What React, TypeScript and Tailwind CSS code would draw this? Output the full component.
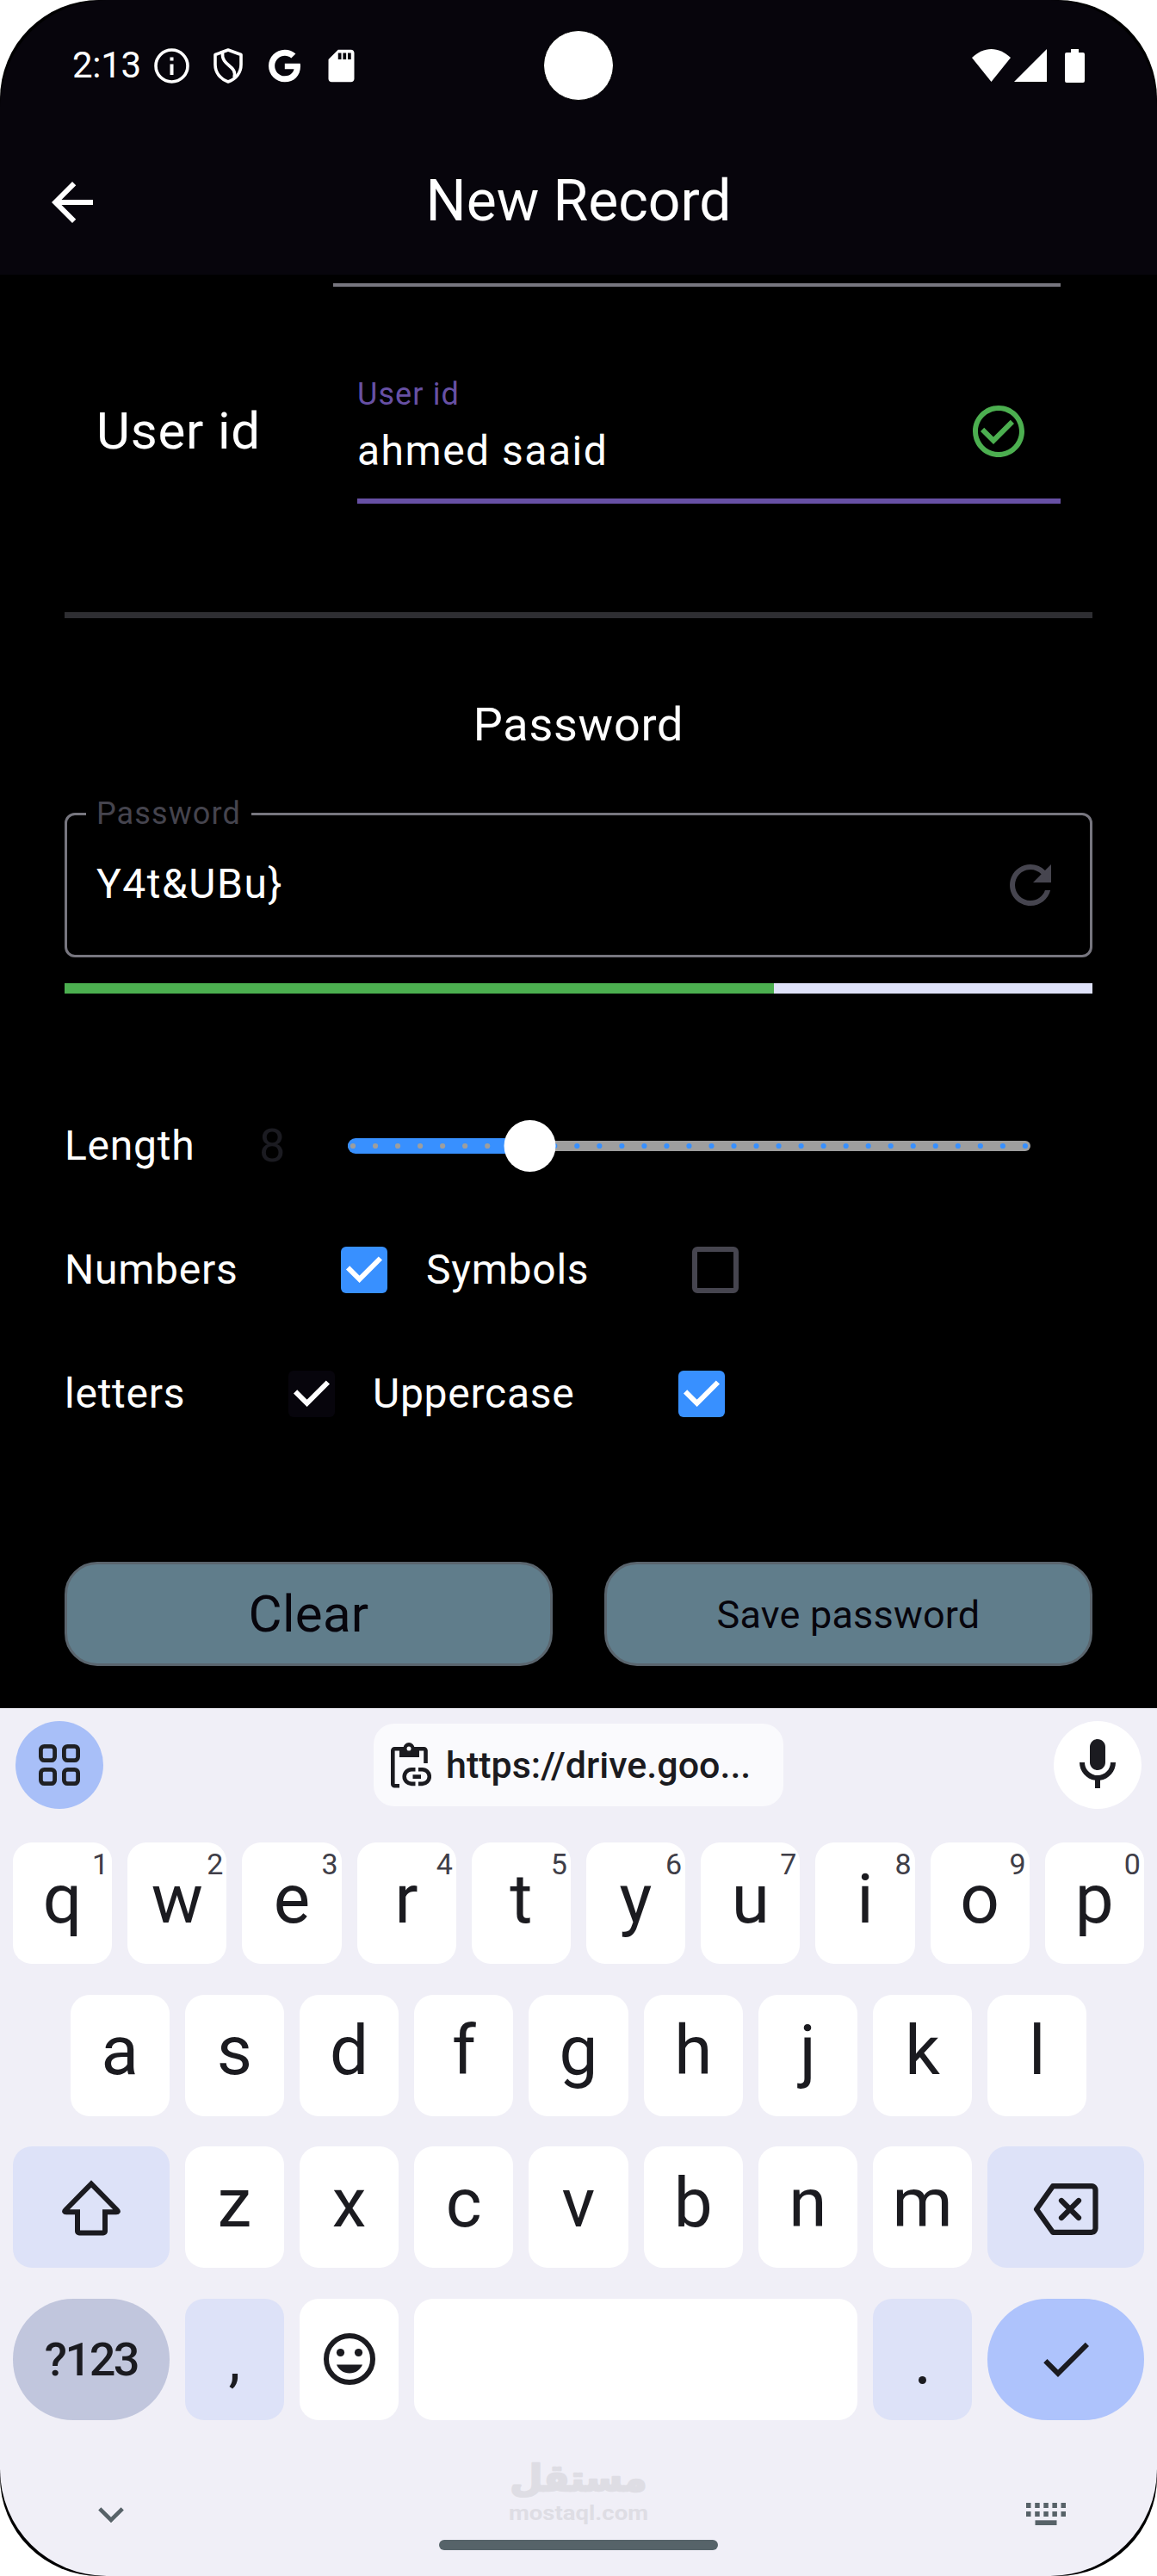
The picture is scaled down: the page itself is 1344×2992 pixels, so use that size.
import type { ReactNode } from "react";
import { MdArrowBack, MdCheckCircleOutline, MdRefresh, MdSdCard, MdCheck } from "react-icons/md";
import { FaGoogle } from "react-icons/fa";

function StatusBar() {
  return (
    <div className="relative flex h-[152px] shrink-0 items-center pl-[84px] pr-[84px] text-white">
      <span className="w-[95px] text-[42px] leading-[48px] tracking-[-0.300px]">2:13</span>
      <svg className="h-[41px] w-[41px]" viewBox="0 0 41 41" fill="none">
        <circle cx="20.5" cy="20.5" r="18.5" stroke="currentColor" strokeWidth="3.6" />
        <path d="M20.5 18.5V31M20.5 10.5v4" stroke="currentColor" strokeWidth="4" />
      </svg>
      <svg className="ml-[28px] h-[41px] w-[34px]" viewBox="0 0 34 41" fill="none" stroke="currentColor" strokeWidth="3.6" strokeLinejoin="round">
        <path d="M17 2 32 7.5V19c0 9.500-6 17-15 20C8 36 2 28.500 2 19V7.500Z" />
        <path d="M10.500 5C9 22 28 19 24 34" />
      </svg>
      <FaGoogle className="ml-[30px] h-[39px] w-[37px]" />
      <MdSdCard className="ml-[25px] h-[45px] w-[45px]" />
      <div className="absolute left-[631px] top-[35px] h-[82px] w-[82px] rounded-full border border-black bg-white" />
      <svg className="ml-auto h-[38px] w-[45px]" viewBox="0 0 45 38" fill="currentColor">
        <path d="M0 10C7 3.500 14.500 0 22.500 0S38 3.500 45 10L22.500 38Z" />
      </svg>
      <svg className="ml-[4px] h-[38px] w-[38px]" viewBox="0 0 38 38" fill="currentColor">
        <path d="M38 0v38H0Z" />
      </svg>
      <svg className="ml-[21px] h-[39px] w-[23px]" viewBox="0 0 23 39" fill="currentColor">
        <path d="M7 0h9v4h5a2 2 0 0 1 2 2v31a2 2 0 0 1-2 2H2a2 2 0 0 1-2-2V6a2 2 0 0 1 2-2h5Z" />
      </svg>
    </div>
  );
}

function Checkbox({ tone }: { tone: "blue" | "dark" | "empty" }) {
  if (tone === "empty") {
    return <div className="h-[54px] w-[54px] shrink-0 rounded-[6px] border-[6px] border-[#46454f]" />;
  }
  return (
    <div className={`h-[54px] w-[54px] shrink-0 rounded-[6px] ${tone === "blue" ? "bg-[#3890ff]" : "bg-[#07050c]"}`}>
      <svg viewBox="0 0 54 54" fill="none" className="h-full w-full">
        <path d="M8.100 24.300 21.600 37.800 45.900 13.500" stroke="#fff" strokeWidth="6" />
      </svg>
    </div>
  );
}

function LengthSlider() {
  const ticks = Array.from({ length: 31 }, (_, i) => i);
  return (
    <svg className="h-[60px] w-[793px]" viewBox="0 0 793 60">
      <rect x="0" y="24" width="793" height="12" rx="6" fill="#9e9e9e" />
      <rect x="0" y="21" width="220" height="18" rx="9" fill="#3890ff" />
      {ticks.map((i) => (
        <circle key={i} cx={6 + i * 26.03} cy="30" r="3.1" fill={i < 8 ? "#9e9e9e" : "#3890ff"} />
      ))}
      <circle cx="211.500" cy="30" r="30" fill="#fff" />
    </svg>
  );
}

function Form() {
  return (
    <div className="flex h-[1665px] flex-col bg-black px-[75px] text-[48px] text-white">
      <div className="ml-[312px] mt-[10px] h-[3.500px] w-[845px] bg-[#77767f]" />

      <div className="mt-[84.500px] flex h-[168px] items-center pl-[37px] pr-[37px]">
        <div className="w-[303px] shrink-0 text-[60px] leading-[72px] tracking-[0.800px]">User id</div>
        <div className="flex h-[168px] flex-1 items-center border-b-[6px] border-[#6750a4] pr-[36px]">
          <div className="h-[168px] flex-1 pt-[20px]">
            <div className="text-[36px] leading-[48px] tracking-[1.100px] text-[#6750a4]">User id</div>
            <div className="mt-[6px] leading-[72px] tracking-[1.500px]">ahmed saaid</div>
          </div>
          <MdCheckCircleOutline className="mt-[6px] h-[72px] w-[72px] text-[#4caf50]" />
        </div>
      </div>

      <div className="mt-[126px] h-[6.500px] shrink-0 bg-[#2e2e32]" />
      <div className="mt-[92px] text-center text-[54px] leading-[64px] tracking-[0.750px]">Password</div>

      <div className="relative mt-[70px] flex h-[168px] shrink-0 items-center justify-between rounded-[12px] border-[3px] border-[#77767f] pl-[34px] pr-[33px]">
        <span className="absolute left-[22px] top-[-26px] w-[192px] bg-black pl-[12px] text-[36px] leading-[48px] tracking-[1.100px] text-[#45444e]">
          Password
        </span>
        <span className="-mt-[2px] leading-[72px] tracking-[1.500px]">Y4t&amp;UBu&#125;</span>
        <MdRefresh className="h-[72px] w-[72px] text-[#46454f]" />
      </div>

      <div className="mt-[30px] flex h-[12.500px] shrink-0 bg-[#dfe2f9]">
        <div className="w-[824px] bg-[#4caf50]" />
      </div>

      <div className="mt-[104.500px] flex h-[144px] shrink-0 items-center tracking-[0.750px]">
        <span className="w-[226px]">Length</span>
        <span className="w-[103px] text-[54px] text-[#1b1b21]">8</span>
        <LengthSlider />
      </div>
      <div className="flex h-[144px] shrink-0 items-center tracking-[0.750px]">
        <span className="w-[321px]">Numbers</span>
        <Checkbox tone="blue" />
        <span className="ml-[45px] w-[309px]">Symbols</span>
        <Checkbox tone="empty" />
      </div>
      <div className="flex h-[144px] shrink-0 items-center tracking-[0.750px]">
        <span className="w-[260px]">letters</span>
        <Checkbox tone="dark" />
        <span className="ml-[44px] w-[355px]">Uppercase</span>
        <Checkbox tone="blue" />
      </div>

      <div className="mt-[123px] grid h-[121px] shrink-0 grid-cols-2 gap-[60px] text-[#07050c]">
        <button className="rounded-[38px] border-[3px] border-[#5a656e] bg-[#607d8b] pt-[2px] text-[60px] tracking-[0.300px]">Clear</button>
        <button className="rounded-[38px] border-[3px] border-[#5a656e] bg-[#607d8b] pt-[3px] text-[45px] tracking-[0.200px]">Save password</button>
      </div>
    </div>
  );
}

function Key({ children, hint, className = "w-[115.200px] rounded-[22px] bg-white" }: { children?: ReactNode; hint?: string; className?: string }) {
  return (
    <div className={`relative flex h-[141px] shrink-0 items-center justify-center ${className}`}>
      {children}
      {hint && <span className="absolute right-[4px] top-[5px] text-[34px] leading-[40px] text-[#3f3e48]">{hint}</span>}
    </div>
  );
}

function Letter({ children }: { children: ReactNode }) {
  return <span className="pb-[10px] text-[80px] leading-[90px]">{children}</span>;
}

function Suggestions() {
  return (
    <div className="flex h-[156px] items-start justify-between pl-[18px] pr-[18px] pt-[15px]">
      <div className="flex h-[102px] w-[102px] items-center justify-center rounded-full bg-[#a8bff8]">
        <svg className="h-[48px] w-[48px]" viewBox="0 0 48 48" fill="none" stroke="#1f2023" strokeWidth="4.800">
          <rect x="2.400" y="2.400" width="16.200" height="16.200" rx="4" />
          <rect x="29.400" y="2.400" width="16.200" height="16.200" rx="4" />
          <rect x="2.400" y="29.400" width="16.200" height="16.200" rx="4" />
          <rect x="29.400" y="29.400" width="16.200" height="16.200" rx="4" />
        </svg>
      </div>
      <div className="mt-[3px] flex h-[96px] w-[476px] items-center rounded-[24px] bg-[#fafafd] pl-[20px]">
        <svg className="h-[53px] w-[47px]" viewBox="0 0 47 53" fill="none" stroke="#1b1b20" strokeWidth="4.600">
          <path d="M10 50.200H4.300a2 2 0 0 1-2-2V9.300a2 2 0 0 1 2-2H38.500a2 2 0 0 1 2 2V24" />
          <path d="M10 5h5a7 7 0 0 1 12 0h6v12H10Z" fill="#1b1b20" stroke="none" />
          <circle cx="21" cy="6.500" r="6.500" fill="#1b1b20" stroke="none" />
          <circle cx="21" cy="7" r="2.500" fill="#fafafd" stroke="none" />
          <path d="M28.500 31.300H24a8.300 8.300 0 0 0 0 16.600h4.500M32 31.300h4.500a8.300 8.300 0 0 1 0 16.600H32M25.500 39.600h9.500" />
        </svg>
        <span className="ml-[17px] text-[43px] font-medium leading-[56px]">https://drive.goo...</span>
      </div>
      <div className="flex h-[102px] w-[102px] items-center justify-center rounded-full bg-white">
        <svg className="h-[72px] w-[72px]" viewBox="0 0 24 24" fill="#1b1b20">
          <path d="M12 14c1.660 0 3-1.340 3-3V5c0-1.660-1.340-3-3-3S9 3.340 9 5v6c0 1.660 1.340 3 3 3z" />
          <path d="M17 11c0 2.760-2.240 5-5 5s-5-2.240-5-5H5c0 3.530 2.610 6.430 6 6.920V21h2v-3.080c3.390-.49 6-3.390 6-6.920h-2z" />
        </svg>
      </div>
    </div>
  );
}

function Keyboard() {
  return (
    <div className="flex h-[1008px] flex-col bg-[#f0eff7] text-[#1b1b20]">
      <Suggestions />
      <div className="flex flex-col gap-[35.600px] px-[15px]">
        <div className="flex justify-between">
          {"qwertyuiop".split("").map((c, i) => (
            <Key key={c} hint={String((i + 1) % 10)}>
              <Letter>{c}</Letter>
            </Key>
          ))}
        </div>
        <div className="flex justify-center gap-[18px]">
          {"asdfghjkl".split("").map((c) => (
            <Key key={c}>
              <Letter>{c}</Letter>
            </Key>
          ))}
        </div>
        <div className="flex gap-[18px]">
          <Key className="w-[181.800px] rounded-[22px] bg-[#dde2f8]">
            <svg className="h-[66px] w-[68px]" viewBox="0 0 68 66" fill="none" stroke="#1b1b20" strokeWidth="6" strokeLinejoin="round">
              <path d="M34 5.500 4 36c-1.500 1.500-1 2.300 1 2.300H18V60.500a2 2 0 0 0 2 2H48a2 2 0 0 0 2-2V38.300H63c2 0 2.500-.8 1-2.300Z" strokeLinejoin="miter" strokeMiterlimit="2" />
            </svg>
          </Key>
          {"zxcvbnm".split("").map((c) => (
            <Key key={c}>
              <Letter>{c}</Letter>
            </Key>
          ))}
          <Key className="w-[181.800px] rounded-[22px] bg-[#dde2f8]">
            <svg className="mt-[4px] h-[60px] w-[76px]" viewBox="0 0 76 60" fill="none" stroke="#1b1b20" strokeWidth="6.200" strokeLinejoin="round" strokeLinecap="round">
              <path d="M23 3.200H68a4.500 4.500 0 0 1 4.500 4.500V52.300A4.500 4.500 0 0 1 68 56.800H23L4 30Z" />
              <path d="m33 20 20 20M53 20 33 40" />
            </svg>
          </Key>
        </div>
        <div className="flex gap-[18px]">
          <Key className="w-[181.800px] rounded-[70px] bg-[#c1c6dd]">
            <span className="text-[54px] font-medium tracking-[-2.500px]">?123</span>
          </Key>
          <Key className="w-[115.200px] rounded-[22px] bg-[#dde2f8]">
            <span className="pt-[2px] text-[70px] leading-[80px]">,</span>
          </Key>
          <Key>
            <svg className="h-[60px] w-[60px]" viewBox="0 0 60 60" fill="#1b1b20">
              <circle cx="30" cy="30" r="27" fill="none" stroke="#1b1b20" strokeWidth="6" />
              <circle cx="19.500" cy="22.500" r="4.600" />
              <circle cx="40.500" cy="22.500" r="4.600" />
              <path d="M15 36.500H45C42.500 42.500 37 46.500 30 46.500S17.500 42.500 15 36.500Z" />
            </svg>
          </Key>
          <Key className="flex-1 rounded-[22px] bg-white" />
          <Key className="w-[115.200px] rounded-[22px] bg-[#dde2f8]">
            <span className="mt-[48px] h-[9px] w-[9px] rounded-full bg-[#1b1b20]" />
          </Key>
          <Key className="w-[181.800px] rounded-[70px] bg-[#aec3fc]">
            <MdCheck className="h-[72px] w-[72px]" />
          </Key>
        </div>
      </div>
      <NavigationBar />
    </div>
  );
}

function NavigationBar() {
  const columns = [0, 10.200, 20.300, 30.400, 40.500];
  return (
    <div className="flex flex-1 items-start justify-between pl-[114px] pr-[106px] text-[#576268]">
      <svg className="mt-[101px] h-[18px] w-[30px]" viewBox="0 0 30 18" fill="none">
        <path d="m1.800 1.800 13.200 13.200 13.200-13.200" stroke="currentColor" strokeWidth="4.600" />
      </svg>
      <div className="ml-[8px] flex w-[324px] flex-col items-center">
        <svg className="mt-[40px] h-[80px] w-[170px] overflow-visible text-[#dedde4]" viewBox="0 0 170 80" fill="currentColor">
          <text x="85" y="42" textAnchor="middle" fontFamily="DejaVu Sans" fontWeight="700" fontSize="42" textLength="159" lengthAdjust="spacingAndGlyphs" stroke="currentColor" strokeWidth="2.500" strokeLinejoin="round">
            مستقل
          </text>
          <text x="85" y="76" textAnchor="middle" fontFamily="Roboto, sans-serif" fontWeight="700" fontSize="24" textLength="162" lengthAdjust="spacingAndGlyphs">
            mostaql.com
          </text>
        </svg>
        <div className="mt-[19px] h-[12px] w-[324px] rounded-full bg-[#566369]" />
      </div>
      <svg className="mt-[96px] h-[26px] w-[46px]" viewBox="0 0 46 26" fill="currentColor">
        {columns.map((x) => (
          <g key={x}>
            <rect x={x} y="0" width="5.500" height="6" />
            <rect x={x} y="10" width="5.500" height="6" />
          </g>
        ))}
        <rect x="10.500" y="20.300" width="25" height="5.700" />
      </svg>
    </div>
  );
}

export default function App() {
  return (
    <div className="h-[2992px] w-[1344px] bg-white font-[Roboto,sans-serif]">
      <div className="h-full w-full overflow-hidden rounded-[115px] bg-black">
        <div className="flex h-full w-full flex-col overflow-hidden rounded-[124px] bg-[#07050c]">
          <StatusBar />
          <header className="relative flex h-[167px] shrink-0 items-center justify-center pb-[4px] text-white">
            <MdArrowBack className="absolute left-[48px] top-[47px] h-[72px] w-[72px]" />
            <h1 className="text-[66px] leading-[84px]">New Record</h1>
          </header>
          <Form />
          <Keyboard />
        </div>
      </div>
    </div>
  );
}
